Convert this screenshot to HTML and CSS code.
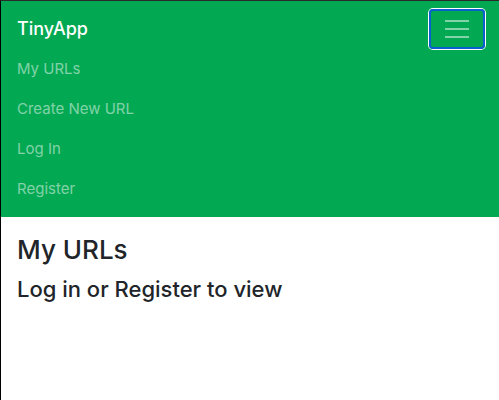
FILE: index.html
```html
<!DOCTYPE html>
<html lang="en">
<head>
<meta charset="utf-8">
<title>TinyApp</title>
<link rel="stylesheet" href="styles.css">
</head>
<body>
<header class="navbar">
  <div class="navbar-top">
    <a class="brand" href="#">TinyApp</a>
    <button class="toggler" type="button" aria-label="Toggle navigation" aria-expanded="true">
      <svg class="toggler-icon" viewBox="0 0 30 30" aria-hidden="true"><path d="M3 7h24M3 15h24M3 23h24"/></svg>
    </button>
  </div>
  <nav class="nav">
    <a class="nav-link" href="#">My URLs</a>
    <a class="nav-link" href="#">Create New URL</a>
    <a class="nav-link" href="#">Log In</a>
    <a class="nav-link" href="#">Register</a>
  </nav>
</header>
<main class="content">
  <h3 class="title">My URLs</h3>
  <h4 class="subtitle">Log in or Register to view</h4>
</main>
</body>
</html>
```

FILE: styles.css
```css
* {
  box-sizing: border-box;
}

body {
  margin: 0;
  min-height: 100vh;
  border-top: 1px solid #2b2b2b;
  border-left: 1px solid #000;
  background: #fff;
  color: #212529;
  font-family: Inter, "Liberation Sans", sans-serif;
  font-size: 15px;
  line-height: 24px;
}

.navbar {
  padding: 8px 14px 8px 16px;
  background: #02a852;
}

.navbar-top {
  display: flex;
  align-items: center;
  justify-content: space-between;
}

.brand {
  color: #fff;
  font-size: 18px;
  font-weight: 500;
  text-decoration: none;
}

.toggler {
  display: flex;
  padding: 3px 11px;
  border: 2px solid #0a60d0;
  border-radius: 4px;
  background: transparent;
  box-shadow: 0 0 0 1px #fff;
}

.toggler-icon {
  width: 30px;
  height: 30px;
  fill: none;
  stroke: rgba(255, 255, 255, 0.5);
  stroke-width: 2;
}

.nav {
  display: flex;
  flex-direction: column;
}

.nav-link {
  padding: 8px 0;
  color: rgba(255, 255, 255, 0.5);
  text-decoration: none;
}

.content {
  padding: 16px;
}

.title,
.subtitle {
  margin: 0 0 8px;
  font-weight: 500;
}

.title {
  font-size: 26px;
  line-height: 34px;
}

.subtitle {
  font-size: 22px;
  line-height: 28px;
}
```
